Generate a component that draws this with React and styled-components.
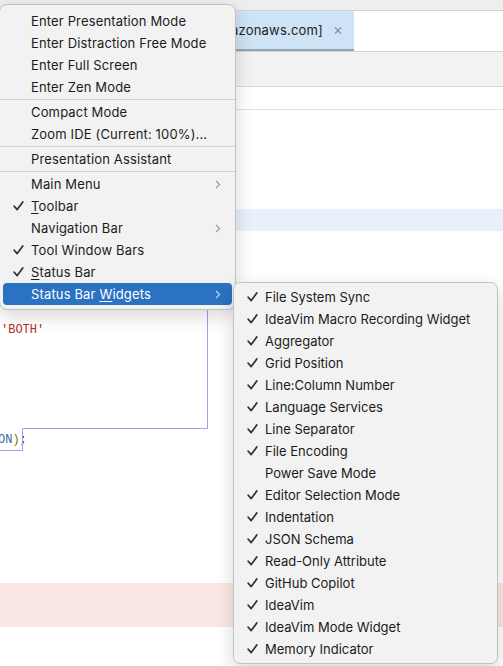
import React from "react";
import styled, { createGlobalStyle } from "styled-components";

const GlobalStyle = createGlobalStyle`
  html, body {
    margin: 0;
    padding: 0;
  }
  body {
    width: 503px;
    height: 666px;
    overflow: hidden;
    background: #fff;
    font-family: Inter, "Noto Sans", sans-serif;
  }
`;

const viewItems = [
  { label: "Enter Presentation Mode" },
  { label: "Enter Distraction Free Mode" },
  { label: "Enter Full Screen" },
  { label: "Enter Zen Mode" },
  { sep: true },
  { label: "Compact Mode" },
  { label: "Zoom IDE (Current: 100%)..." },
  { sep: true },
  { label: "Presentation Assistant" },
  { sep: true },
  { label: "Main Menu", sub: true },
  { label: "oolbar", mnemonic: "T", checked: true },
  { label: "Navigation Bar", sub: true },
  { label: "Tool Window Bars", checked: true },
  { label: "tatus Bar", mnemonic: "S", checked: true },
  { label: "Status Bar ", mnemonic: "W", rest: "idgets", sub: true, active: true },
];

const widgets = [
  ["File System Sync", true],
  ["IdeaVim Macro Recording Widget", true],
  ["Aggregator", true],
  ["Grid Position", true],
  ["Line:Column Number", true],
  ["Language Services", true],
  ["Line Separator", true],
  ["File Encoding", true],
  ["Power Save Mode", false],
  ["Editor Selection Mode", true],
  ["Indentation", true],
  ["JSON Schema", true],
  ["Read-Only Attribute", true],
  ["GitHub Copilot", true],
  ["IdeaVim", true],
  ["IdeaVim Mode Widget", true],
  ["Memory Indicator", true],
];

function Check() {
  return (
    <svg width="11" height="10" viewBox="0 0 11 10">
      <path d="M1.2 5.2 L4.2 8.6 L9.8 1" fill="none" stroke="#2e2e2e" strokeWidth="1.7" strokeLinecap="round" strokeLinejoin="round" />
    </svg>
  );
}

function Chevron({ light }) {
  return (
    <svg width="6" height="9" viewBox="0 0 6 9">
      <path d="M1 0.8 L4.6 4.5 L1 8.2" fill="none" stroke={light ? "#c9d9ee" : "#9a9a9a"} strokeWidth="1.2" />
    </svg>
  );
}

export default function App() {
  const lines = Array.from({ length: 26 }, (_, i) => i);

  return (
    <Screen>
      <GlobalStyle />
      <TopStrip />
      <TabBar>
        <Tab>
          <TabTitle>[s3.amazonaws.com]</TabTitle>
          <TabClose>×</TabClose>
        </Tab>
      </TabBar>
      <ToolStrip />
      <Breadcrumbs />
      <Editor>
        {lines.map((i) => (
          <CodeLine key={i} $tone={i === 4 ? "caret" : i === 21 || i === 22 ? "error" : null}>
            {i === 9 && <Str>'BOTH'</Str>}
            {i === 14 && (
              <Shifted>
                <Const>ON</Const>
                <Paren>)</Paren>;
              </Shifted>
            )}
          </CodeLine>
        ))}
        <BlockOutline width="503" height="360" viewBox="0 0 503 360">
          <path
            d="M207.5 170 V318.5 H22.5 V340.5 H-2"
            fill="none"
            stroke="#ae96f3"
            strokeWidth="1"
          />
        </BlockOutline>
      </Editor>

      <ViewMenu>
        {viewItems.map((it, i) =>
          it.sep ? (
            <Separator key={i} />
          ) : (
            <Item key={i} $active={it.active}>
              <CheckSlot>{it.checked && <Check />}</CheckSlot>
              <Label>
                {it.active ? (
                  <>
                    {it.label}
                    <u>{it.mnemonic}</u>
                    {it.rest}
                  </>
                ) : it.mnemonic ? (
                  <>
                    <u>{it.mnemonic}</u>
                    {it.label}
                  </>
                ) : (
                  it.label
                )}
              </Label>
              {it.sub && <Chevron light={it.active} />}
            </Item>
          )
        )}
      </ViewMenu>

      <WidgetMenu>
        {widgets.map(([label, on]) => (
          <Item key={label}>
            <CheckSlot>{on && <Check />}</CheckSlot>
            <Label>{label}</Label>
          </Item>
        ))}
      </WidgetMenu>
    </Screen>
  );
}

const Screen = styled.div`
  position: relative;
  width: 503px;
  height: 666px;
  overflow: hidden;
  background: #fff;
`;

const TopStrip = styled.div`
  height: 10px;
  background: #eeeeee;
`;

const TabBar = styled.div`
  display: flex;
  height: 40px;
  background: #fff;
  border-top: 1px solid #d2d2d2;
  border-bottom: 1px solid #d2d2d2;
`;

const Tab = styled.div`
  display: flex;
  align-items: center;
  justify-content: flex-end;
  gap: 10px;
  width: 354px;
  padding-right: 11px;
  box-sizing: border-box;
  overflow: hidden;
  background: #cfe3f6;
  box-shadow: inset 0 -2px 0 #95a3ba;
  font-size: 13px;
  color: #1e1e1e;
`;

const TabTitle = styled.span`
  white-space: nowrap;
  padding-bottom: 2px;
  letter-spacing: 0.2px;
`;

const TabClose = styled.span`
  color: #8f8f8f;
  font-size: 15px;
  padding-bottom: 3px;
`;

const ToolStrip = styled.div`
  height: 34px;
  background: #f2f2f2;
  border-bottom: 1px solid #d9d9d9;
`;

const Breadcrumbs = styled.div`
  height: 22px;
  background: #fff;
  border-bottom: 1px solid #e2e2e2;
`;

const Editor = styled.div`
  position: relative;
  padding-top: 11px;
  font-family: "Liberation Mono", "DejaVu Sans Mono", monospace;
  font-size: 12px;
`;

const CodeLine = styled.div`
  height: 22px;
  line-height: 22px;
  padding-left: 1px;
  white-space: pre;
  color: #1f1f1f;
  background: ${(p) =>
    p.$tone === "caret" ? "#e8f0fc" : p.$tone === "error" ? "#fbe8e5" : "transparent"};
`;

const Str = styled.span`
  color: #b3301c;
`;

const Shifted = styled.span`
  margin-left: -3px;
`;

const Const = styled.span`
  color: #3a64a6;
`;

const Paren = styled.span`
  color: #8c6c12;
`;

const BlockOutline = styled.svg`
  position: absolute;
  left: 0;
  top: 0;
  overflow: visible;
  pointer-events: none;
`;

const Menu = styled.div`
  position: absolute;
  box-sizing: border-box;
  background: #f2f2f2;
  border: 1px solid #c2c2c2;
  border-radius: 8px;
  box-shadow: 0 6px 18px rgba(0, 0, 0, 0.16);
  font-size: 13px;
`;

const ViewMenu = styled(Menu)`
  left: -1px;
  top: 4px;
  width: 237px;
  padding: 5px 0 4px;
  letter-spacing: 0.15px;
`;

const WidgetMenu = styled(Menu)`
  left: 233px;
  top: 282px;
  width: 265px;
  padding: 3px 0 3px;
  border-radius: 7px;
`;

const Item = styled.div`
  display: flex;
  align-items: center;
  height: 22px;
  margin: 0 3px;
  padding: 0 11px 0 10px;
  border-radius: 4px;
  background: ${(p) => (p.$active ? "#2b72c2" : "transparent")};
  color: ${(p) => (p.$active ? "#ffffff" : "#1b1b1b")};
`;

const CheckSlot = styled.span`
  display: flex;
  align-items: center;
  width: 18px;
  flex: none;
`;

const Label = styled.span`
  flex: 1;
  white-space: nowrap;

  u {
    text-underline-offset: 2px;
  }
`;

const Separator = styled.div`
  margin: 1px 0;
  border-top: 1px solid #d4d4d4;
`;
